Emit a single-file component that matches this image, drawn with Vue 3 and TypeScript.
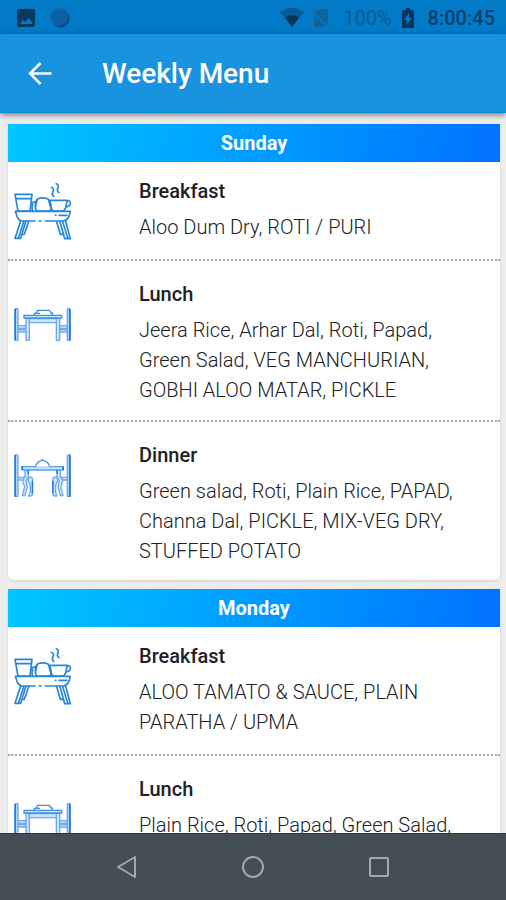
<script setup lang="ts">
type MealName = 'Breakfast' | 'Lunch' | 'Dinner'

interface Meal {
  name: MealName
  items: string
}

interface DayMenu {
  day: string
  meals: Meal[]
}

const menu: DayMenu[] = [
  {
    day: 'Sunday',
    meals: [
      { name: 'Breakfast', items: 'Aloo Dum Dry, ROTI / PURI' },
      { name: 'Lunch', items: 'Jeera Rice, Arhar Dal, Roti, Papad, Green Salad, VEG MANCHURIAN, GOBHI ALOO MATAR, PICKLE' },
      { name: 'Dinner', items: 'Green salad, Roti, Plain Rice, PAPAD, Channa Dal, PICKLE, MIX-VEG DRY, STUFFED POTATO' },
    ],
  },
  {
    day: 'Monday',
    meals: [
      { name: 'Breakfast', items: 'ALOO TAMATO & SAUCE, PLAIN PARATHA / UPMA' },
      { name: 'Lunch', items: 'Plain Rice, Roti, Papad, Green Salad,' },
    ],
  },
]
</script>

<template>
  <div class="screen">
    <div class="status">
      <div class="status-group left">
        <svg width="20" height="20" viewBox="0 0 20 20" aria-hidden="true">
          <path fill="#08395f" fill-rule="evenodd" d="M3 1h14a2 2 0 0 1 2 2v14a2 2 0 0 1-2 2H3a2 2 0 0 1-2-2V3a2 2 0 0 1 2-2zM4 16h13l-4-6-4 4-2-2z" />
        </svg>
        <svg width="20" height="20" viewBox="0 0 20 20" aria-hidden="true">
          <circle cx="10.500" cy="10.500" r="9" fill="#074b7e" />
          <circle cx="9" cy="9" r="9" fill="#0a62a2" />
        </svg>
      </div>
      <div class="status-group right">
        <svg class="wifi" width="24" height="20" viewBox="0 0 24 20" aria-hidden="true">
          <path fill="#065c99" d="M12 19 0 4a19 19 0 0 1 24 0z" />
          <path fill="#07365a" d="M12 19 5 9.500a12 12 0 0 1 14 0z" />
        </svg>
        <svg class="sim" width="18" height="20" viewBox="0 0 18 20" aria-hidden="true">
          <path fill="#11649b" d="M7 1h8a1 1 0 0 1 1 1v14L4 4zM2 6l12 13H3a1 1 0 0 1-1-1z" />
          <path d="m1 1 16 18" stroke="#11649b" stroke-width="1.500" />
        </svg>
        <span class="battery-level">100%</span>
        <svg class="battery" width="12" height="20" viewBox="0 0 12 20" aria-hidden="true">
          <path fill="#07365a" fill-rule="evenodd" d="M4 0h4v2h3a1 1 0 0 1 1 1v16a1 1 0 0 1-1 1H1a1 1 0 0 1-1-1V3a1 1 0 0 1 1-1h3zM7 5l-5 7h3l-1 5 6-7H7z" />
        </svg>
        <time class="clock">8:00:45</time>
      </div>
    </div>

    <header class="appbar">
      <button class="back" type="button" aria-label="Back">
        <svg width="24" height="24" viewBox="0 0 24 24" fill="none" stroke="#fff" stroke-width="2.500" aria-hidden="true">
          <path d="M23.500 12.500H2M12.500 2 2 12.500l10.500 10.500" />
        </svg>
      </button>
      <h1>Weekly Menu</h1>
    </header>

    <main class="content">
      <section v-for="entry in menu" :key="entry.day" class="card">
        <h2>{{ entry.day }}</h2>
        <article v-for="meal in entry.meals" :key="meal.name" class="meal">
          <svg v-if="meal.name === 'Breakfast'" class="meal-icon" viewBox="42 18 174 240" aria-hidden="true">
            <g fill="none" stroke="#2786dc" stroke-width="5" stroke-linejoin="round" stroke-linecap="round">
              <path d="M45 73H96L90 123H54ZM47 86H93" />
              <path d="M93 104Q99 93 109 97M98 123Q94 113 98 104" />
              <path d="M112 87Q128 80 144 87Q158 101 151 123H109Q101 101 112 87ZM112 87Q109 98 107 108M145 87Q148 97 151 108" />
              <path d="M149 91H202L197 113Q194 123 184 123H161Q151 119 149 91ZM201 92Q212 90 211 101Q210 109 198 111" />
              <path d="M154 52Q164 56 159 64Q154 72 161 79M169 41Q178 45 174 54Q169 63 177 68" />
              <path d="M46 124H211L208 137Q201 153 188 153H136M46 124L51 139Q56 151 65 153H105M118 153H123M177 136H201M166 136H168" />
              <path d="M62 153L45 205H62L78 153M71 155L55 205M86 155L73 193H64" />
              <path d="M196 150L211 206H194L180 155M188 155L204 206M170 155L181 193H192" />
            </g>
          </svg>
          <svg v-else-if="meal.name === 'Lunch'" class="meal-icon" viewBox="42 -33 174 240" aria-hidden="true">
            <g fill="#cfe5fc" stroke="#6ba9ed" stroke-width="4" stroke-linejoin="round">
              <path d="M54 107H78V115H54ZM54 119H78V126H54ZM178 107H202V115H178ZM178 119H202V126H178Z" />
              <path d="M78 85H88V151H78ZM169 85H179V151H169Z" />
              <path d="M88 86H169V98H88Z" />
              <path fill="#fff" stroke="#3c8fe2" d="M103 75V70H108L113 61H148L153 69H157V76M109 70H120" />
              <path stroke="#3c8fe2" d="M72 76H185V84H72Z" />
              <path d="M45 57Q50 54 54 57V151H45ZM202 57Q206 54 211 57V151H202Z" />
            </g>
            <path d="M46 57V151M209 57V151" stroke="#1679d8" stroke-width="5" />
          </svg>
          <svg v-else class="meal-icon" viewBox="42 0 174 240" aria-hidden="true">
            <g fill="#cfe5fc" stroke="#6ba9ed" stroke-width="4" stroke-linejoin="round">
              <path d="M54 112H74V120H54ZM182 112H202V120H182Z" />
              <path d="M75 91V112Q66 116 69 128L74 140L67 167H75L82 140L78 122L85 112V91Z" />
              <path d="M181 91V112Q190 116 187 128L182 140L189 167H181L174 140L178 122L171 112V91Z" />
              <path d="M85 112Q97 108 98 120V160Q98 168 91 168H85L91 156V136L84 122Z" />
              <path d="M171 112Q159 108 158 120V160Q158 168 165 168H170L167 156V136L173 122Z" />
              <path stroke="#5a9fe8" d="M66 80H190V90H66Z" />
              <path fill="#fff" stroke="#3c8fe2" d="M107 80Q110 66 123 62Q126 58 131 62Q146 66 149 80" />
              <path d="M45 45Q50 42 54 47V169H45ZM202 47Q206 42 211 45V169H202Z" />
            </g>
            <g fill="none" stroke="#1679d8" stroke-width="5">
              <path d="M46 45V170M209 45V170M67 79V89M189 80V89" />
              <path stroke-width="4" d="M97 123V160M159 123V160M85 90V102M171 90V102" />
            </g>
          </svg>
          <div class="meal-text">
            <h3>{{ meal.name }}</h3>
            <p>{{ meal.items }}</p>
          </div>
        </article>
      </section>
    </main>

    <nav class="navbar" aria-label="System navigation">
      <button type="button" aria-label="Back">
        <svg width="24" height="24" viewBox="0 0 24 24" aria-hidden="true"><path d="M20 2v20L3 12z" /></svg>
      </button>
      <button type="button" aria-label="Home">
        <svg width="24" height="24" viewBox="0 0 24 24" aria-hidden="true"><circle cx="12" cy="12" r="10" /></svg>
      </button>
      <button type="button" aria-label="Recent apps">
        <svg width="24" height="24" viewBox="0 0 24 24" aria-hidden="true"><rect x="3" y="3" width="18" height="18" rx="1" /></svg>
      </button>
    </nav>
  </div>
</template>

<style>
body {
  margin: 0;
}
</style>

<style scoped>
.screen {
  display: flex;
  flex-direction: column;
  height: 100vh;
  background: #eeeded;
  color: #202124;
  font-family: Roboto, "Liberation Sans", sans-serif;
}

h1,
h2,
h3,
p {
  margin: 0;
}

button {
  display: flex;
  align-items: center;
  justify-content: center;
  padding: 0;
  border: 0;
  background: none;
}

.status {
  display: flex;
  flex: none;
  align-items: center;
  justify-content: space-between;
  box-sizing: border-box;
  height: 34px;
  padding: 2px 11px 0 16px;
  background: #027ac8;
}

.status-group {
  display: flex;
  align-items: center;
}

.left {
  gap: 14px;
}

.wifi {
  margin-right: 8px;
}

.sim {
  margin-right: 13px;
}

.battery-level {
  margin-right: 10px;
  color: #075a92;
  font-size: 20px;
}

.battery {
  margin-right: 14px;
}

.clock {
  color: #07406b;
  font-size: 20px;
  font-weight: 500;
}

.appbar {
  z-index: 1;
  display: flex;
  flex: none;
  align-items: center;
  gap: 50px;
  box-sizing: border-box;
  height: 79px;
  padding: 0 28px;
  background: #1992e0;
  border-bottom: 1px solid #0d85cc;
  box-shadow: 0 2px 6px rgba(0, 0, 0, 0.5);
}

.appbar h1 {
  color: #fff;
  font-size: 28px;
  font-weight: 500;
}

.content {
  display: flex;
  flex: 1;
  flex-direction: column;
  gap: 9px;
  min-height: 0;
  padding: 11px 6px 0 8px;
  overflow-y: auto;
  scrollbar-width: none;
}

.card {
  flex: none;
  background: #fff;
  border-radius: 0 0 6px 6px;
  box-shadow: 0 1px 3px rgba(0, 0, 0, 0.12);
}

.card h2 {
  background: linear-gradient(100deg, #00c6ff, #0072ff);
  color: #fff;
  font-size: 20px;
  font-weight: 700;
  line-height: 38px;
  text-align: center;
}

.meal {
  display: flex;
  align-items: flex-start;
  gap: 67px;
  padding: 18px 22px 15px 6px;
  border-bottom: 2px dotted #a8a8a8;
}

.meal:first-of-type {
  padding-top: 14px;
  padding-bottom: 17px;
}

.meal:last-child {
  padding-bottom: 14px;
  border-bottom: 0;
}

.meal-icon {
  flex: none;
  width: 58px;
  height: 80px;
  margin-bottom: -20px;
}

.meal-text {
  flex: 1;
}

.meal h3 {
  margin-bottom: 6px;
  font-size: 20px;
  font-weight: 500;
  line-height: 30px;
}

.meal p {
  font-size: 20px;
  font-weight: 300;
  line-height: 30px;
}

.navbar {
  z-index: 1;
  display: flex;
  flex: none;
  align-items: center;
  justify-content: center;
  gap: 102px;
  box-sizing: border-box;
  height: 67px;
  background: #454e54;
  border-top: 1px solid #263a3f;
}

.navbar svg {
  fill: none;
  stroke: #a3a9ad;
  stroke-width: 2;
  stroke-linejoin: round;
}
</style>
